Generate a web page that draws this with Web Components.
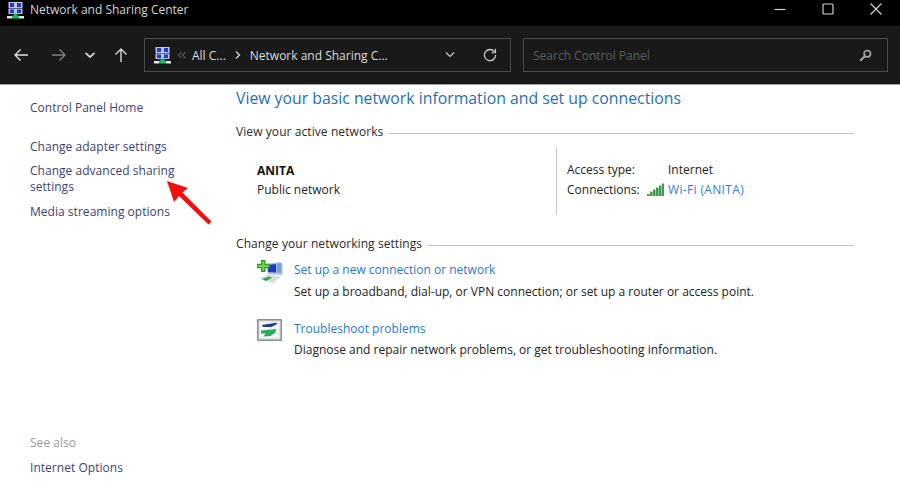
<!DOCTYPE html>
<html>
<head>
<meta charset="utf-8">
<title>Network and Sharing Center</title>
<style>
    html, body { margin: 0; height: 100%; background: #fff; }
    body { width: 900px; height: 500px; overflow: hidden; font-family: "Open Sans", "Noto Sans", sans-serif; display: flex; flex-direction: column; position: relative; }
</style>
</head>
<body>
<script>
const NET_ICON = (s) => `<svg width="${s}" height="${s}" viewBox="0 0 17 17">
    <rect x="1.5" y="0" width="14" height="6" fill="#b9c6e6"/>
    <rect x="3" y="1" width="4" height="4" fill="#2238d0"/><rect x="10" y="1" width="4" height="4" fill="#2238d0"/>
    <rect x="1.5" y="6.5" width="14" height="5.5" fill="#b9c6e6"/>
    <rect x="3" y="7.5" width="4" height="3.5" fill="#2238d0"/><rect x="10" y="7.5" width="4" height="3.5" fill="#2238d0"/>
    <rect x="7" y="11.5" width="3" height="3" fill="#12c060"/>
    <rect x="5" y="13.5" width="7" height="3" fill="#12c060"/>
    <rect x="0" y="14" width="5" height="2.5" fill="#e8e8e8"/><rect x="12" y="14" width="5" height="2.5" fill="#e8e8e8"/>
</svg>`;

customElements.define('win-titlebar', class extends HTMLElement {
    constructor() {
        super();
        this.attachShadow({ mode: 'open' }).innerHTML = `
        <style>
            :host { display: flex; align-items: center; height: 26px; background: #000; color: #d4d4d4; font-size: 12px; padding-left: 7px; flex: none; }
            .icon { width: 17px; height: 17px; margin-right: 6px; margin-top: -6px; }
            .label { flex: 1; margin-top: -8px; }
            .btns { display: flex; align-items: center; margin-top: -8px; }
            .btns svg { display: block; }
            .btns div { width: 48px; display: flex; justify-content: center; }
        </style>
        <div class="icon">${NET_ICON(17)}</div>
        <div class="label"><slot></slot></div>
        <div class="btns">
            <div><svg width="14" height="12" viewBox="0 0 14 12"><path d="M1.5 6.5H12.5" stroke="#d0d0d0" stroke-width="1.2"/></svg></div>
            <div><svg width="14" height="12" viewBox="0 0 14 12"><rect x="2" y="1" width="10" height="10" rx="1" fill="none" stroke="#d0d0d0" stroke-width="1.2"/></svg></div>
            <div><svg width="14" height="12" viewBox="0 0 14 12"><path d="M1.5 .5L12.5 11.5M12.5 .5L1.5 11.5" stroke="#d0d0d0" stroke-width="1.2"/></svg></div>
        </div>`;
    }
});

customElements.define('win-toolbar', class extends HTMLElement {
    constructor() {
        super();
        this.attachShadow({ mode: 'open' }).innerHTML = `
        <style>
            :host { display: flex; align-items: center; height: 58px; background: #191919; border-bottom: 1px solid #a0a0a0; box-sizing: content-box; flex: none; font-size: 12px; color: #dcdcdc; }
            svg { display: block; }
            .nav { display: flex; align-items: center; width: 144px; padding-left: 13px; box-sizing: border-box; }
            .nav svg { flex: none; }
            .field { height: 34px; border: 1px solid #4a4a4a; box-sizing: border-box; display: flex; align-items: center; }
            .addr { width: 367px; padding-left: 9px; }
            .addr .crumb { white-space: nowrap; }
            .gap { width: 12px; flex: none; }
            .search { width: 365px; padding: 0 0 0 9px; color: #5f5f5f; }
            .grow { flex: 1; }
        </style>
        <div class="nav">
            <svg width="16" height="14" viewBox="0 0 16 14" style="margin-right:22px"><path d="M15 7H2M7.5 1.5L2 7l5.5 5.5" fill="none" stroke="#e0e0e0" stroke-width="1.4"/></svg>
            <svg width="16" height="14" viewBox="0 0 16 14" style="margin-right:17px"><path d="M1 7h13M8.5 1.5L14 7l-5.5 5.5" fill="none" stroke="#808080" stroke-width="1.4"/></svg>
            <svg width="12" height="14" viewBox="0 0 12 14" style="margin-right:18px"><path d="M1.5 5L6 9l4.5-4" fill="none" stroke="#d0d0d0" stroke-width="1.7"/></svg>
            <svg width="14" height="16" viewBox="0 0 14 16"><path d="M7 15V2M1.5 7.5L7 2l5.5 5.5" fill="none" stroke="#d8d8d8" stroke-width="1.4"/></svg>
        </div>
        <div class="field addr">
            ${NET_ICON(17)}
            <svg width="10" height="8" viewBox="0 0 10 8" style="margin:0 5px 0 6px"><path d="M4.5 1L1.5 4l3 3M8.5 1L5.5 4l3 3" fill="none" stroke="#777" stroke-width="1"/></svg>
            <span class="crumb">All C...</span>
            <svg width="8" height="10" viewBox="0 0 8 10" style="margin:0 8px 0 8px"><path d="M2 1.5L5.5 5 2 8.5" fill="none" stroke="#d8d8d8" stroke-width="1.3"/></svg>
            <span class="crumb">Network and Sharing C...</span>
            <span class="grow"></span>
            <svg width="12" height="8" viewBox="0 0 12 8" style="margin-right:27px"><path d="M2 1.5L6 5.5l4-4" fill="none" stroke="#cfcfcf" stroke-width="1.1"/></svg>
            <svg width="14" height="14" viewBox="0 0 14 14" style="margin-right:13px"><path d="M11.8 4.2A5.6 5.6 0 1 0 12.6 7" fill="none" stroke="#c8c8c8" stroke-width="1.3"/><path d="M12.5 .8v4H8.5" fill="none" stroke="#c8c8c8" stroke-width="1.1"/></svg>
        </div>
        <div class="gap"></div>
        <div class="field search">
            <span>Search Control Panel</span>
            <span class="grow"></span>
            <svg width="13" height="13" viewBox="0 0 13 13" style="margin-right:15px"><circle cx="8.3" cy="4.7" r="3.2" fill="none" stroke="#a8a8a8" stroke-width="1.6"/><path d="M6 7L1.2 11.8" stroke="#a8a8a8" stroke-width="2"/></svg>
        </div>`;
    }
});

customElements.define('cp-link', class extends HTMLElement {
    constructor() {
        super();
        this.attachShadow({ mode: 'open' }).innerHTML = `
        <style>
            :host { display: block; color: #3d3f74; line-height: 16px; letter-spacing: .03px; }
            :host([muted]) { color: #9a9a9a; }
        </style><slot></slot>`;
    }
});

customElements.define('cp-sidebar', class extends HTMLElement {
    constructor() {
        super();
        this.attachShadow({ mode: 'open' }).innerHTML = `
        <style>
            :host { display: flex; flex-direction: column; width: 236px; flex: none; box-sizing: border-box; padding: 15px 50px 0 30px; font-size: 12px; }
            .tasks { display: flex; flex-direction: column; gap: 8px; margin-top: 23px; }
            .end { margin-top: auto; padding-bottom: 24px; display: flex; flex-direction: column; gap: 9px; }
        </style>
        <slot name="home"></slot>
        <div class="tasks"><slot name="task"></slot></div>
        <div class="end"><slot name="end"></slot></div>`;
    }
});

customElements.define('cp-section', class extends HTMLElement {
    constructor() {
        super();
        this.attachShadow({ mode: 'open' }).innerHTML = `
        <style>
            :host { display: block; font-size: 12px; }
            .head { display: flex; align-items: center; gap: 5px; line-height: 16px; color: #2a2a2a; letter-spacing: .08px; }
            .head i { flex: 1; height: 1px; background: #c8c8c8; margin-top: 2px; }
        </style>
        <div class="head"><span><slot name="label"></slot></span><i></i></div>
        <slot></slot>`;
    }
});

customElements.define('cp-network', class extends HTMLElement {
    constructor() {
        super();
        this.attachShadow({ mode: 'open' }).innerHTML = `
        <style>
            :host { display: flex; font-size: 12px; color: #222; height: 68px; margin-top: 7px; }
            .who { width: 320px; padding: 14px 0 0 21px; box-sizing: border-box; flex: none; line-height: 19px; }
            b { color: #111; font-weight: 700; display: block; }
            .info { border-left: 1px solid #c8c8c8; padding: 12px 0 0 10px; display: grid; grid-template-columns: 81px 20px auto; grid-auto-rows: 20px; align-items: center; height: 68px; box-sizing: border-box; align-content: start; }
            .wifi { color: #2f7fd0; letter-spacing: .35px; }
            svg { display: block; }
        </style>
        <div class="who"><b>ANITA</b>Public network</div>
        <div class="info">
            <span>Access type:</span><span></span><span>Internet</span>
            <span>Connections:</span>
            <svg width="17" height="13" viewBox="0 0 17 13" style="margin-left:-1px"><path d="M0 13h2V11H0zM3 13h2V8.5H3zM6 13h2V6.5H6zM9 13h2V4.5H9zM12 13h2V2.5H12zM14.8 13h2.2V.5H14.8z" fill="#3f9a4e"/><path d="M2 13h1V11H2zM5 13h1V9H5zM8 13h1V7H8zM11 13h1V5H11zM14 13h.8V3H14z" fill="#8cc79a"/></svg>
            <span class="wifi">Wi-Fi (ANITA)</span>
        </div>`;
    }
});

customElements.define('cp-task', class extends HTMLElement {
    constructor() {
        super();
        this.attachShadow({ mode: 'open' }).innerHTML = `
        <style>
            :host { display: flex; font-size: 12px; padding-left: 21px; gap: 11px; color: #222; }
            .icon { width: 26px; flex: none; }
            .link { color: #2778c9; line-height: 20px; }
            .desc { line-height: 20px; margin-top: 1.5px; }
        </style>
        <div class="icon"><slot name="icon"></slot></div>
        <div><div class="link"><slot name="link"></slot></div><div class="desc"><slot></slot></div></div>`;
    }
});

customElements.define('cp-main', class extends HTMLElement {
    constructor() {
        super();
        this.attachShadow({ mode: 'open' }).innerHTML = `
        <style>
            :host { display: block; flex: 1; padding: 2px 46px 0 0; }
            h1 { font-weight: 400; font-size: 15.8px; line-height: 22px; color: #1f6fb5; margin: 0 0 15px; }
        </style>
        <h1>View your basic network information and set up connections</h1>
        <slot></slot>`;
    }
});

customElements.define('cp-page', class extends HTMLElement {
    constructor() {
        super();
        this.attachShadow({ mode: 'open' }).innerHTML = `
        <style>:host { display: flex; flex: 1; min-height: 0; background: #fff; }</style><slot></slot>`;
    }
});
</script>

<win-titlebar>Network and Sharing Center</win-titlebar>
<win-toolbar></win-toolbar>
<cp-page>
    <cp-sidebar>
        <cp-link slot="home">Control Panel Home</cp-link>
        <cp-link slot="task">Change adapter settings</cp-link>
        <cp-link slot="task">Change advanced sharing settings</cp-link>
        <cp-link slot="task" style="margin-top:1px">Media streaming options</cp-link>
        <cp-link slot="end" muted>See also</cp-link>
        <cp-link slot="end">Internet Options</cp-link>
    </cp-sidebar>
    <cp-main>
        <cp-section>
            <span slot="label">View your active networks</span>
            <cp-network></cp-network>
        </cp-section>
        <cp-section style="margin-top:21px">
            <span slot="label">Change your networking settings</span>
            <cp-task style="margin-top:8px">
                <svg slot="icon" width="26" height="24" viewBox="0 0 26 24" style="display:block">
                    <path d="M9 4l14-2 2.5 1.5V15L11 14z" fill="#a9bdd8"/>
                    <path d="M11 5l8-1v8.5l-8-.4z" fill="#1a3cc0"/><path d="M20 4l4-.6v9.2l-4-.2z" fill="#6f9ce6"/>
                    <path d="M2 18.5l9-4 13 2-8 7z" fill="#d9dde0"/><path d="M5 19l7-2.6 3 1.4-6 3.2z" fill="#28a850"/>
                    <path d="M4 0h4.5v3.8h4.2v4.4H8.5V12H4V8.2H0V3.8h4z" fill="#2a9a30"/><path d="M5.2 1.2h2.1v3.8h4.2v2H7.3v3.8H5.2V7H1.2V5h4z" fill="#74d640"/>
                </svg>
                <span slot="link">Set up a new connection or network</span>
                Set up a broadband, dial-up, or VPN connection; or set up a router or access point.
            </cp-task>
            <cp-task style="margin-top:17px">
                <svg slot="icon" width="26" height="23" viewBox="0 0 26 23" style="display:block">
                    <rect x="0" y="0" width="25" height="22" rx="1" fill="#8a8f92"/>
                    <rect x="1.5" y="1.5" width="22" height="19" fill="#dfe2e3"/>
                    <rect x="3" y="3" width="19" height="16" fill="#f6f6f6"/>
                    <path d="M5 6l14-2.2 1.5 1-6 3.2H6z" fill="#1f3a9a"/>
                    <path d="M4 11.5l15-1.5-.5 3.5-5 3.5-7 .5 2-3H4z" fill="#2eaa60"/>
                </svg>
                <span slot="link">Troubleshoot problems</span>
                Diagnose and repair network problems, or get troubleshooting information.
            </cp-task>
        </cp-section>
    </cp-main>
</cp-page>
<svg style="position:absolute;left:160px;top:175px" width="56" height="56" viewBox="0 0 56 56"><path d="M7 6L28 13 22.5 17.5 51.5 46.5 48.5 49.5 19 21 14 27z" fill="#ee1111"/></svg>
</body>
</html>
